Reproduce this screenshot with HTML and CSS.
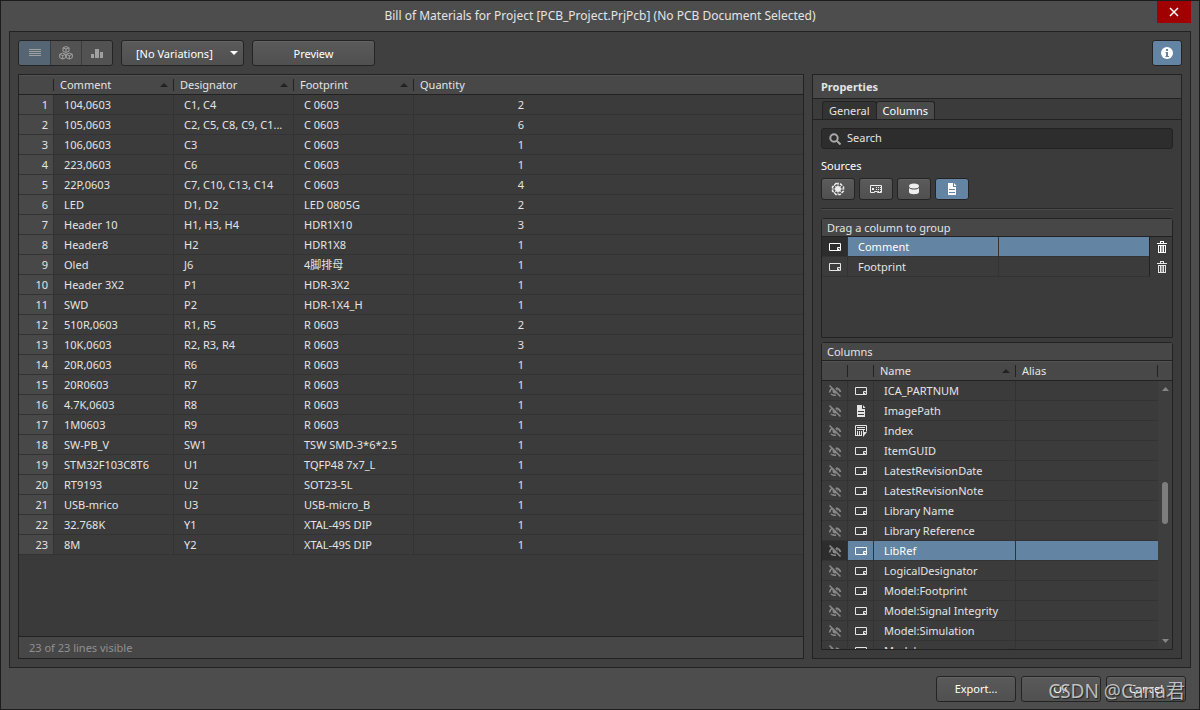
FILE: index.html
```html
<!DOCTYPE html>
<html lang="en">
<head>
<meta charset="utf-8">
<title>Bill of Materials</title>
<link rel="stylesheet" href="styles.css">
</head>
<body>
<svg class="defs" width="0" height="0" aria-hidden="true">
  <symbol id="param" viewBox="0 0 14 14"><path d="M1.500 3.500h11v7h-11z" fill="none" stroke="currentColor"/><path d="M9.500 10V7.500H12M10 9.500h1v-1" fill="none" stroke="currentColor"/></symbol>
  <symbol id="doc" viewBox="0 0 14 14"><path fill="currentColor" d="M3 1h5v4h3v8H3z"/><path fill="currentColor" d="M9 1l2.500 3H9z"/><path d="M4 7.500h6M4 10.500h6" stroke="var(--cut,#3b3b3b)"/></symbol>
  <symbol id="calc" viewBox="0 0 14 14"><path d="M1.500 11.500v-10h11v6M1 11.500h7" fill="none" stroke="currentColor"/><path d="M3 3.500h8M3 5.500h8M3.500 7v4M5.500 7v4M7.500 7v4M9.500 6v2" stroke="currentColor"/><path d="M9 8h4l-4 5z" fill="currentColor"/></symbol>
  <symbol id="eye" viewBox="0 0 14 14"><path d="M1.500 8.500c.5-3 2-4 4-4.500M8 4c2.500.5 4 2 4.500 4M3 10c1 1 3 1.500 5 1" fill="none" stroke="currentColor" stroke-width="1.500"/><circle cx="7" cy="7" r="2.500" fill="currentColor"/><path d="M3 1.500l10 10" stroke="#3b3b3b" stroke-width="1.500"/><path d="M1.500 1.500l11 11" stroke="currentColor" stroke-width="1.500"/></symbol>
  <symbol id="trash" viewBox="0 0 14 14"><path fill="currentColor" d="M6 1h4v2h3v1H3V3h3zM7 2v1h2V2zM4 5h8v8H4z" fill-rule="evenodd"/><path d="M5.500 6v6M8 6v6M10.500 6v6" stroke="#3b3b3b"/></symbol>
</svg>
<div class="window">
  <header class="titlebar">
    <h1 class="title">Bill of Materials for Project [PCB_Project.PrjPcb] (No PCB Document Selected)</h1>
    <button class="close" aria-label="Close"><svg width="10" height="10" viewBox="0 0 10 10"><path d="M1 1l8 8M9 1l-8 8" stroke="#fff" stroke-width="1.500"/></svg></button>
  </header>
  <main class="content">
    <div class="toolbar">
      <div class="modes">
        <button class="mode mode-on" aria-label="Flat list"><svg width="12" height="10"><path d="M0 1.500h12M0 3.500h12M0 5.500h12M0 7.500h12" stroke="#a0a0a0"/></svg></button>
        <button class="mode" aria-label="Grouped"><svg width="14" height="14" viewBox="0 0 14 14" fill="none" stroke="#a0a0a0"><path d="M7 .5l3 1.300v3.400L7 6.500 4 5.200V1.800zM4 1.800l3 1.300 3-1.300M7 3v3.500M3.700 7l3 1.300v3.400l-3 1.300-3-1.300V8.300zM.7 8.300l3 1.300 3-1.300M3.700 9.500V13M10.300 7l3 1.300v3.400l-3 1.300-3-1.300V8.300zM7.300 8.300l3 1.300 3-1.300M10.300 9.500V13"/></svg></button>
        <button class="mode" aria-label="Chart"><svg width="12" height="10" fill="#a0a0a0"><path d="M0 6h3v4H0zM4 1h4v9H4zM9 4h3v6H9z"/></svg></button>
      </div>
      <div class="variation">
        <select class="btn select" aria-label="Variations"><option>[No Variations]</option></select>
        <svg class="caret" width="8" height="4"><path d="M0 0h8L4 4z" fill="#fff"/></svg>
      </div>
      <button class="btn preview">Preview</button>
      <button class="info" aria-label="Information"><svg width="14" height="14" viewBox="0 0 14 14"><circle cx="7" cy="7" r="6" fill="#fff"/><path d="M6 3h2v2H6zM5.500 6H8v4h1v1H5.500v-1H6V7h-.5z" fill="#6384a3"/></svg></button>
    </div>
    <div class="panes">
      <section class="bom">
        <div class="bom-body">
          <table class="grid bom-grid">
            <colgroup><col class="c-num"><col class="c-data"><col class="c-data"><col class="c-data"><col class="c-data"><col></colgroup>
            <thead><tr><th><i class="sep"></i></th><th>Comment<i class="sort"></i><i class="sep"></i></th><th>Designator<i class="sort"></i><i class="sep"></i></th><th>Footprint<i class="sort"></i><i class="sep"></i></th><th colspan="2">Quantity</th></tr></thead>
            <tbody>
              <tr><td>1</td><td>104,0603</td><td>C1, C4</td><td>C 0603</td><td>2</td><td></td></tr>
              <tr><td>2</td><td>105,0603</td><td>C2, C5, C8, C9, C1...</td><td>C 0603</td><td>6</td><td></td></tr>
              <tr><td>3</td><td>106,0603</td><td>C3</td><td>C 0603</td><td>1</td><td></td></tr>
              <tr><td>4</td><td>223,0603</td><td>C6</td><td>C 0603</td><td>1</td><td></td></tr>
              <tr><td>5</td><td>22P,0603</td><td>C7, C10, C13, C14</td><td>C 0603</td><td>4</td><td></td></tr>
              <tr><td>6</td><td>LED</td><td>D1, D2</td><td>LED 0805G</td><td>2</td><td></td></tr>
              <tr><td>7</td><td>Header 10</td><td>H1, H3, H4</td><td>HDR1X10</td><td>3</td><td></td></tr>
              <tr><td>8</td><td>Header8</td><td>H2</td><td>HDR1X8</td><td>1</td><td></td></tr>
              <tr><td>9</td><td>Oled</td><td>J6</td><td>4脚排母</td><td>1</td><td></td></tr>
              <tr><td>10</td><td>Header 3X2</td><td>P1</td><td>HDR-3X2</td><td>1</td><td></td></tr>
              <tr><td>11</td><td>SWD</td><td>P2</td><td>HDR-1X4_H</td><td>1</td><td></td></tr>
              <tr><td>12</td><td>510R,0603</td><td>R1, R5</td><td>R 0603</td><td>2</td><td></td></tr>
              <tr><td>13</td><td>10K,0603</td><td>R2, R3, R4</td><td>R 0603</td><td>3</td><td></td></tr>
              <tr><td>14</td><td>20R,0603</td><td>R6</td><td>R 0603</td><td>1</td><td></td></tr>
              <tr><td>15</td><td>20R0603</td><td>R7</td><td>R 0603</td><td>1</td><td></td></tr>
              <tr><td>16</td><td>4.7K,0603</td><td>R8</td><td>R 0603</td><td>1</td><td></td></tr>
              <tr><td>17</td><td>1M0603</td><td>R9</td><td>R 0603</td><td>1</td><td></td></tr>
              <tr><td>18</td><td>SW-PB_V</td><td>SW1</td><td>TSW SMD-3*6*2.5</td><td>1</td><td></td></tr>
              <tr><td>19</td><td>STM32F103C8T6</td><td>U1</td><td>TQFP48 7x7_L</td><td>1</td><td></td></tr>
              <tr><td>20</td><td>RT9193</td><td>U2</td><td>SOT23-5L</td><td>1</td><td></td></tr>
              <tr><td>21</td><td>USB-mrico</td><td>U3</td><td>USB-micro_B</td><td>1</td><td></td></tr>
              <tr><td>22</td><td>32.768K</td><td>Y1</td><td>XTAL-49S DIP</td><td>1</td><td></td></tr>
              <tr><td>23</td><td>8M</td><td>Y2</td><td>XTAL-49S DIP</td><td>1</td><td></td></tr>
            </tbody>
          </table>
        </div>
        <footer class="status">23 of 23 lines visible</footer>
      </section>
      <aside class="props">
        <h2 class="props-title">Properties</h2>
        <div class="tabs" role="tablist"><button class="tab" role="tab">General</button><button class="tab tab-on" role="tab" aria-selected="true">Columns</button></div>
        <div class="props-body">
          <label class="search"><svg width="12" height="12" viewBox="0 0 12 12" fill="none" stroke="#a8a8a8" stroke-width="2"><circle cx="5" cy="5" r="3.700"/><path d="M7.500 7.500l4 4"/></svg><input class="search-input" type="text" placeholder="Search" aria-label="Search"></label>
          <h3 class="sources-title">Sources</h3>
          <div class="sources">
            <button class="btn source" aria-label="Altium vault"><svg width="14" height="14" viewBox="0 0 14 14"><path d="M5 1.500h4l3.500 3.500v4L9 12.500H5L1.500 9V5z" fill="none" stroke="#eee" stroke-width="1.500" stroke-dasharray="3 1.200"/><circle cx="7" cy="7" r="3" fill="#eee"/><path d="M7 1v3M7 10v3M1 7h3M10 7h3M3 3l2 2M9 9l2 2M11 3L9 5M5 9l-2 2" stroke="#c8c8c8"/></svg></button>
            <button class="btn source" aria-label="PCB parameters"><svg width="14" height="14" viewBox="0 0 14 14"><path d="M1.500 3.500h11v7H8.500v-1H5.500v1h-4z" fill="none" stroke="#eee"/><path d="M3 6h2v2H3zM7 5h1v1H7zM9 5h1v1H9zM11 5h1v1h-1zM7 7h1v1H7zM9 7h1v1H9zM11 7h1v1h-1zM9 9h1v1H9zM11 9h1v1h-1z" fill="#eee"/></svg></button>
            <button class="btn source" aria-label="Database"><svg width="14" height="14" viewBox="0 0 14 14"><ellipse cx="7" cy="4" rx="5" ry="2.500" fill="#eee"/><path d="M2 6c2 2 8 2 10 0v4c0 3-10 3-10 0z" fill="#eee"/></svg></button>
            <button class="btn source source-on" aria-label="Document"><svg class="icon"><use href="#doc"/></svg></button>
          </div>
          <div class="group">
            <h3 class="box-title">Drag a column to group</h3>
            <table class="grid group-grid">
              <colgroup><col class="c-icon"><col><col><col class="c-trash"></colgroup>
              <tbody>
                <tr class="sel"><td><svg class="icon"><use href="#param"/></svg></td><td>Comment</td><td></td><td><button class="del" aria-label="Remove Comment"><svg class="icon"><use href="#trash"/></svg></button></td></tr>
                <tr><td><svg class="icon"><use href="#param"/></svg></td><td>Footprint</td><td></td><td><button class="del" aria-label="Remove Footprint"><svg class="icon"><use href="#trash"/></svg></button></td></tr>
              </tbody>
            </table>
          </div>
          <div class="columns">
            <h3 class="box-title">Columns</h3>
            <div class="cols-view">
              <table class="grid cols-grid">
                <colgroup><col class="c-icon"><col class="c-icon"><col><col><col class="c-scroll"></colgroup>
                <thead><tr><th><i class="sep"></i></th><th><i class="sep"></i></th><th>Name<i class="sort"></i><i class="sep"></i></th><th>Alias<i class="sep"></i></th><th></th></tr></thead>
                <tbody>
                  <tr><td><svg class="icon"><use href="#eye"/></svg></td><td><svg class="icon"><use href="#param"/></svg></td><td>ICA_PARTNUM</td><td></td><td class="scroll" rowspan="14"><svg class="bar" width="14" height="268"><path d="M4 10h7L7.500 6z" fill="#858585"/><rect x="4" y="101" width="6" height="42" rx="3" fill="#7d7d7d"/><path d="M4 258h7l-3.500 4z" fill="#858585"/></svg></td></tr>
                  <tr><td><svg class="icon"><use href="#eye"/></svg></td><td><svg class="icon"><use href="#doc"/></svg></td><td>ImagePath</td><td></td></tr>
                  <tr><td><svg class="icon"><use href="#eye"/></svg></td><td><svg class="icon"><use href="#calc"/></svg></td><td>Index</td><td></td></tr>
                  <tr><td><svg class="icon"><use href="#eye"/></svg></td><td><svg class="icon"><use href="#param"/></svg></td><td>ItemGUID</td><td></td></tr>
                  <tr><td><svg class="icon"><use href="#eye"/></svg></td><td><svg class="icon"><use href="#param"/></svg></td><td>LatestRevisionDate</td><td></td></tr>
                  <tr><td><svg class="icon"><use href="#eye"/></svg></td><td><svg class="icon"><use href="#param"/></svg></td><td>LatestRevisionNote</td><td></td></tr>
                  <tr><td><svg class="icon"><use href="#eye"/></svg></td><td><svg class="icon"><use href="#param"/></svg></td><td>Library Name</td><td></td></tr>
                  <tr><td><svg class="icon"><use href="#eye"/></svg></td><td><svg class="icon"><use href="#param"/></svg></td><td>Library Reference</td><td></td></tr>
                  <tr class="sel"><td><svg class="icon"><use href="#eye"/></svg></td><td><svg class="icon"><use href="#param"/></svg></td><td>LibRef</td><td></td></tr>
                  <tr><td><svg class="icon"><use href="#eye"/></svg></td><td><svg class="icon"><use href="#param"/></svg></td><td>LogicalDesignator</td><td></td></tr>
                  <tr><td><svg class="icon"><use href="#eye"/></svg></td><td><svg class="icon"><use href="#param"/></svg></td><td>Model:Footprint</td><td></td></tr>
                  <tr><td><svg class="icon"><use href="#eye"/></svg></td><td><svg class="icon"><use href="#param"/></svg></td><td>Model:Signal Integrity</td><td></td></tr>
                  <tr><td><svg class="icon"><use href="#eye"/></svg></td><td><svg class="icon"><use href="#param"/></svg></td><td>Model:Simulation</td><td></td></tr>
                  <tr><td><svg class="icon"><use href="#eye"/></svg></td><td><svg class="icon"><use href="#param"/></svg></td><td>Models</td><td></td></tr>
                </tbody>
              </table>
            </div>
          </div>
        </div>
      </aside>
    </div>
  </main>
  <footer class="actions">
    <button class="btn action">Export...</button>
    <button class="btn action">OK</button>
    <button class="btn action">Cancel</button>
    <span class="watermark">CSDN @Cana君</span>
  </footer>
</div>
</body>
</html>
```
FILE: styles.css
```css
* { box-sizing: border-box; }
body {
  margin: 0;
  background: #4d4d4d;
  color: #e4e4e4;
  font: 11px/19px "Noto Sans", "Noto Sans CJK SC", sans-serif;
}
button, input, select { font: inherit; color: inherit; margin: 0; padding: 0; border: 0; }
h1, h2, h3 { margin: 0; font-size: inherit; font-weight: normal; }
svg { display: block; }
.defs { position: absolute; }
.icon { width: 14px; height: 14px; margin: 0 auto; }

.window { height: 100vh; display: flex; flex-direction: column; padding: 0 8px; border: 1px solid #1c1c1c; }
.titlebar { display: grid; grid-template-columns: 34px 1fr 34px; height: 30px; }
.title { grid-column: 2; text-align: center; font-size: 12px; line-height: 30px; }
.close { display: grid; place-items: center; height: 22px; background: #a00000; }

.content { flex: 1; min-height: 0; display: flex; flex-direction: column; gap: 8px; padding: 8px; border: 1px solid #222; background: #404040; }
.toolbar { display: flex; gap: 8px; height: 26px; }
.btn { border: 1px solid #242424; border-radius: 3px; background: linear-gradient(#5a5a5a, #505050); color: #fff; box-shadow: inset 0 1px #626262; }
.modes { display: flex; border: 1px solid #242424; border-radius: 3px; background: #3a3a3a; gap: 1px; overflow: hidden; }
.mode { width: 30px; display: grid; place-items: center; background: #525252; }
.mode-on { width: 31px; background: #566573; }
.variation { position: relative; display: flex; }
.select { width: 123px; padding: 0 14px; appearance: none; }
.caret { position: absolute; right: 6px; top: 11px; pointer-events: none; }
.preview { width: 123px; }
.info { width: 30px; margin-left: auto; display: grid; place-items: center; border: 1px solid #242424; border-radius: 3px; background: #6384a3; }

.panes { flex: 1; min-height: 0; display: grid; grid-template-columns: minmax(0, 1fr) 370px; gap: 8px; }
.bom { display: flex; flex-direction: column; min-height: 0; border: 1px solid #222; }
.bom-body { flex: 1; min-height: 0; overflow: hidden; background: #3a3a3a; }
.status { padding: 0 10px; line-height: 21px; border-top: 1px solid #222; background: #474747; color: #909090; }

.grid { width: 100%; table-layout: fixed; border-collapse: separate; border-spacing: 0; }
.grid td, .grid th { height: 20px; padding: 0 0 0 10px; overflow: hidden; white-space: nowrap; text-align: left; font-weight: normal; }
.grid td { border-right: 1px solid #333; border-bottom: 1px solid #333; background: #3b3b3b; }
.grid th { position: relative; padding-left: 6px; border-bottom: 1px solid #222; background: #484848; box-shadow: inset 0 1px #525252; }
.sep { position: absolute; right: 0; top: 4px; bottom: 3px; width: 1px; background: #222; }
.sort { position: absolute; right: 6px; top: 8px; border: 4px solid transparent; border-top: 0; border-bottom-color: #222; }
.grid .sel td { background: #6384a3; color: #fff; }
.grid .sel td:first-child { background: #2d2d2d; }

.c-num { width: 35px; }
.c-data { width: 120px; }
.bom-grid td:first-child { padding: 0 5px 0 0; text-align: right; background: #484848; }
.bom-grid td:nth-child(5) { padding: 0 10px 0 0; text-align: right; border-right: 0; }
.bom-grid td:last-child { border-right: 0; }

.props { display: flex; flex-direction: column; min-height: 0; border: 1px solid #222; background: #3b3b3b; }
.props-title { padding: 0 8px; line-height: 23px; font-weight: bold; border-bottom: 1px solid #222; background: #484848; }
.tabs { display: flex; padding: 2px 9px 0; border-bottom: 1px solid #222; }
.tab { height: 18px; padding: 0 6px; line-height: 17px; border: 1px solid #222; border-bottom: 0; border-radius: 3px 3px 0 0; background: #333; }
.tab + .tab { margin-left: -1px; }
.tab-on { background: #4a4a4a; color: #fff; }
.props-body { flex: 1; min-height: 0; display: flex; flex-direction: column; padding: 8px; }
.search { display: flex; align-items: center; gap: 6px; padding: 0 7px; border: 1px solid #222; border-radius: 3px; background: #2d2d2d; }
.search-input { flex: 1; height: 19px; padding-bottom: 2px; background: none; }
.search-input::placeholder { color: #e4e4e4; opacity: 1; }
.sources-title { margin-top: 7px; color: #fff; }
.sources { display: flex; gap: 4px; padding: 3px 0 8px; border-bottom: 1px solid #282828; box-shadow: 0 1px #4a4a4a; }
.source { width: 34px; height: 22px; display: grid; place-items: center; }
.source-on { background: #6384a3; box-shadow: none; --cut: #6384a3; }
.group { height: 120px; margin: 9px 0 4px; border: 1px solid #222; border-radius: 3px 3px 0 0; }
.box-title { padding: 0 5px; line-height: 17px; border-bottom: 1px solid #222; background: #474747; }
.c-icon { width: 26px; }
.c-trash { width: 22px; }
.c-scroll { width: 14px; }
.group-grid td:first-child, .group-grid td:last-child, .cols-grid td:nth-child(-n+2) { padding: 0; }
.group-grid td:last-child, .group-grid .sel td:last-child { background: #3b3b3b; border: 0; }
.group-grid td:nth-child(3) { border-right-color: #222; }
.cols-grid td:nth-child(4) { border-right: 0; }
.del { display: block; width: 100%; background: none; }
.columns { flex: 1; min-height: 0; display: flex; flex-direction: column; border: 1px solid #222; border-radius: 3px 3px 0 0; }
.cols-view { flex: 1; min-height: 0; overflow: hidden; }
.cols-grid td:first-child { color: #8a8a8a; }
.grid.cols-grid .sel td:first-child { color: #8a8a8a; }
.cols-grid .scroll { padding: 0; border: 0; background: #3e3e3e; vertical-align: top; }

.actions { position: relative; display: flex; justify-content: flex-end; gap: 5px; padding: 8px 5px 7px; }
.action { width: 80px; height: 26px; padding-bottom: 2px; }
.watermark { position: absolute; right: 6px; top: 11px; font-size: 19px; line-height: 24px; color: rgba(215, 215, 215, .85); text-shadow: 1px 1px 1px #222; pointer-events: none; }
```
